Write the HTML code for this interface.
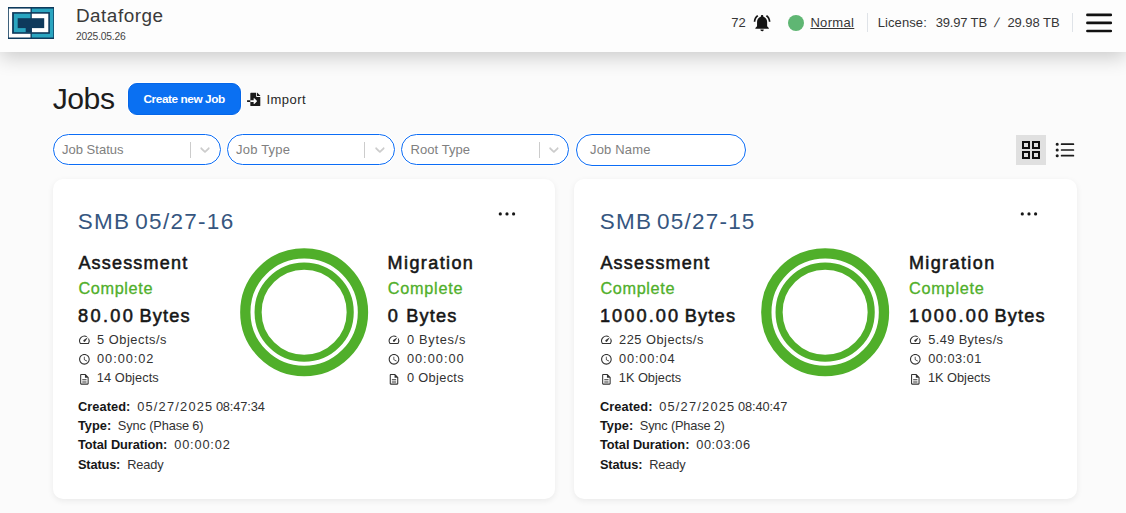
<!DOCTYPE html>
<html lang="en">
<head>
<meta charset="utf-8">
<title>Dataforge - Jobs</title>
<style>
*{box-sizing:border-box}
html,body{margin:0;padding:0}
body{width:1126px;height:513px;overflow:hidden;position:relative;background:#fbfbfb;font-family:"Liberation Sans",sans-serif;color:#1f1f1f}
.t{position:absolute;margin:0;padding:0;white-space:pre;font-weight:400;font-style:normal}
.ic,.ring{position:absolute;display:block;overflow:visible}
header{position:absolute;left:0;top:0;width:1126px;height:52px;background:#fdfdfd;box-shadow:0 5px 20px rgba(0,0,0,.2);z-index:2}
main{position:absolute;left:0;top:0;width:1126px;height:513px}
.vsep{position:absolute;top:13px;width:1px;height:19px;background:#dfe3e8}
.dot{position:absolute;left:788px;top:15px;width:16px;height:16px;border-radius:50%;background:#5fb673}
.btn{position:absolute;left:128px;top:83px;width:113px;height:32px;margin:0;padding:0;font:inherit;border-radius:9px;background:#0a70f2;border:1px solid #0566e8;box-shadow:0 0 0 1px #fff}
.sel{position:absolute;top:134px;width:168px;height:31px;border:1px solid #0c6df6;border-radius:16px;background:#fff;box-shadow:0 0 0 1px #fff}
.sel .sep{position:absolute;left:136px;top:7px;width:1px;height:16px;background:#cccccc}
.inp{position:absolute;left:576px;top:134px;width:170px;height:32px;border:1px solid #0c6df6;border-radius:16px;background:#fff;box-shadow:0 0 0 1px #fff}
.gridbtn{position:absolute;left:1016px;top:135px;width:30px;height:30px;background:#e0e0e0}
.card{position:absolute;top:179px;height:320px;border-radius:10px;background:#fff;box-shadow:0 2px 6px rgba(0,0,0,.07)}
</style>
</head>
<body>
<header>
    <svg class="ic" style="left:8px;top:7px" width="46" height="32" viewBox="0 0 46 32">
      <rect width="46" height="32" fill="#0e3a5c"/>
      <rect x="0.8" y="1.6" width="21.7" height="28.9" fill="#fff"/>
      <rect x="23.8" y="1.6" width="21.5" height="28.9" fill="#2aa5c0"/>
      <rect x="4.1" y="5.1" width="37.8" height="21.7" fill="#0e3a5c"/>
      <rect x="5.9" y="6.7" width="16.6" height="18.5" fill="#2aa5c0"/>
      <rect x="23.8" y="6.7" width="16.5" height="18.5" fill="#fff"/>
      <rect x="9.7" y="11.2" width="26.5" height="9.9" fill="#0e3a5c"/>
      <rect x="17.7" y="20" width="6.1" height="5.3" fill="#0e3a5c"/>
    </svg>
    <span class="t" style="left:75.90px;top:7.00px;font-size:18.9px;line-height:18.9px;letter-spacing:0.529px;color:#3a3a3a;">Dataforge</span>
    <span class="t" style="left:76.00px;top:32.00px;font-size:10.3px;line-height:10.3px;letter-spacing:-0.194px;color:#444;">2025.05.26</span>
    <span class="t" style="left:731.20px;top:16.00px;font-size:13px;line-height:13px;letter-spacing:0.031px;color:#363636;">72</span>
    <svg class="ic" style="left:752px;top:12px" width="20.2" height="20.2" viewBox="0 0 24 24" fill="#151515"><path transform="translate(0.000 0.950)" d="M7.58 4.08L6.15 2.65C3.75 4.48 2.17 7.3 2.03 10.5h2c.15-2.65 1.51-4.97 3.55-6.42zm12.39 6.42h2c-.15-3.2-1.73-6.02-4.12-7.85l-1.42 1.43c2.02 1.45 3.39 3.77 3.54 6.42zM18 11c0-3.07-1.64-5.64-4.5-6.32V4c0-.83-.67-1.5-1.5-1.5s-1.5.67-1.5 1.5v.68C7.63 5.36 6 7.92 6 11v5l-2 2v1h16v-1l-2-2v-5zm-6 11c.14 0 .27-.01.4-.04.65-.14 1.18-.58 1.44-1.18.1-.24.15-.5.15-.78h-4c.01 1.1.9 2 2.01 2z"/></svg>
    <i class="dot"></i>
    <a class="t" style="left:810.40px;top:16.00px;font-size:13px;line-height:13px;letter-spacing:0.332px;color:#363636;text-decoration:underline;text-decoration-thickness:1px;text-underline-offset:1px;">Normal</a>
    <i class="vsep" style="left:867px"></i>
    <span class="t" style="left:877.70px;top:16.00px;font-size:13px;line-height:13px;letter-spacing:0.097px;color:#363636;">License:</span>
    <span class="t" style="left:935.70px;top:16.00px;font-size:13px;line-height:13px;letter-spacing:-0.162px;color:#363636;">39.97 TB</span>
    <span class="t" style="left:995.20px;top:16.00px;font-size:13px;line-height:13px;color:#363636;display:inline-block;transform:skewX(-16deg);">/</span>
    <span class="t" style="left:1007.40px;top:16.00px;font-size:13px;line-height:13px;letter-spacing:-0.033px;color:#363636;">29.98 TB</span>
    <i class="vsep" style="left:1072px"></i>
    <svg class="ic burger" style="left:1084px;top:10px" width="30" height="26" viewBox="0 0 30 26" fill="none" stroke="#111" stroke-width="2.6" stroke-linecap="round"><path d="M3.4 4.9H26.8M3.4 12.9H26.8M3.4 21H26.8"/></svg>
</header>
<main>
    <h1 class="t" style="left:52.70px;top:84.00px;font-size:30.2px;line-height:30.2px;letter-spacing:-0.489px;color:#1d1d1d;">Jobs</h1>
    <button class="btn" type="button"><span class="t" style="left:14.50px;top:10.00px;font-size:11.8px;line-height:11.8px;font-weight:700;letter-spacing:-0.423px;color:#ffffff;">Create new Job</span></button>
    <svg class="ic" style="left:247px;top:92px" width="13.3" height="13.3" viewBox="0 0 512 512" fill="#1b1b1b"><path transform="translate(0.000 30.797)" d="M16 288c-8.8 0-16 7.2-16 16v32c0 8.8 7.2 16 16 16h112v-64zm489-183L407.1 7c-4.5-4.5-10.600-7-17-7H384v128h128v-6.100c0-6.300-2.500-12.400-7-16.900zm-153 31V0H152c-13.300 0-24 10.700-24 24v264h128v-65.200c0-14.300 17.300-21.400 27.400-11.300L379 308c6.600 6.700 6.600 17.400 0 24l-95.700 96.400c-10.100 10.100-27.400 3-27.400-11.300V352H128v136c0 13.300 10.700 24 24 24h336c13.300 0 24-10.700 24-24V160H376c-13.200 0-24-10.800-24-24z"/></svg>
    <span class="t" style="left:266.50px;top:93.00px;font-size:13px;line-height:13px;letter-spacing:0.451px;color:#262626;">Import</span>
    <div class="sel" style="left:53px"><span class="t" style="left:8.00px;top:8.00px;font-size:13px;line-height:13px;letter-spacing:0.007px;color:#808080;">Job Status</span><i class="sep"></i><svg class="ic" style="left:143px;top:6px" width="16" height="16" viewBox="0 0 20 20" fill="#cccccc"><path transform="translate(0.000 0.750)" d="M4.516 7.548c0.436-0.446 1.043-0.481 1.576 0l3.908 3.747 3.908-3.747c0.533-0.481 1.141-0.446 1.574 0 0.436 0.445 0.408 1.197 0 1.615-0.406 0.418-4.695 4.502-4.695 4.502-0.217 0.223-0.502 0.335-0.787 0.335s-0.570-0.112-0.789-0.335c0 0-4.287-4.084-4.695-4.502s-0.436-1.170 0-1.615z"/></svg></div>
    <div class="sel" style="left:227px"><span class="t" style="left:8.00px;top:8.00px;font-size:13px;line-height:13px;letter-spacing:0.21px;color:#808080;">Job Type</span><i class="sep"></i><svg class="ic" style="left:143px;top:6px" width="16" height="16" viewBox="0 0 20 20" fill="#cccccc"><path transform="translate(1.125 0.750)" d="M4.516 7.548c0.436-0.446 1.043-0.481 1.576 0l3.908 3.747 3.908-3.747c0.533-0.481 1.141-0.446 1.574 0 0.436 0.445 0.408 1.197 0 1.615-0.406 0.418-4.695 4.502-4.695 4.502-0.217 0.223-0.502 0.335-0.787 0.335s-0.570-0.112-0.789-0.335c0 0-4.287-4.084-4.695-4.502s-0.436-1.170 0-1.615z"/></svg></div>
    <div class="sel" style="left:401px"><span class="t" style="left:8.50px;top:8.00px;font-size:13px;line-height:13px;letter-spacing:0.059px;color:#808080;">Root Type</span><i class="sep" style="left:137px"></i><svg class="ic" style="left:143px;top:6px" width="16" height="16" viewBox="0 0 20 20" fill="#cccccc"><path transform="translate(1.125 0.750)" d="M4.516 7.548c0.436-0.446 1.043-0.481 1.576 0l3.908 3.747 3.908-3.747c0.533-0.481 1.141-0.446 1.574 0 0.436 0.445 0.408 1.197 0 1.615-0.406 0.418-4.695 4.502-4.695 4.502-0.217 0.223-0.502 0.335-0.787 0.335s-0.570-0.112-0.789-0.335c0 0-4.287-4.084-4.695-4.502s-0.436-1.170 0-1.615z"/></svg></div>
    <div class="inp"><span class="t" style="left:13.00px;top:8.00px;font-size:13px;line-height:13px;letter-spacing:0.179px;color:#808080;">Job Name</span></div>
    <div class="gridbtn"></div>
    <svg class="ic" style="left:1019px;top:138px" width="24" height="24" viewBox="0 0 24 24" fill="#111"><path d="M3 3v8h8V3H3zm6 6H5V5h4v4zm-6 4v8h8v-8H3zm6 6H5v-4h4v4zm4-16v8h8V3h-8zm6 6h-4V5h4v4zm-6 4v8h8v-8h-8zm6 6h-4v-4h4v4z"/></svg>
    <svg class="ic" style="left:1053px;top:138px" width="24" height="24" viewBox="0 0 24 24" fill="#1c1c1c" stroke="#1c1c1c" stroke-width="1.7" stroke-linecap="round"><circle cx="4.2" cy="6.2" r="0.7"/><circle cx="4.2" cy="12" r="0.7"/><circle cx="4.2" cy="17.7" r="0.7"/><path d="M8.6 6.2H20.4M8.6 12H20.4M8.6 17.7H20.4" fill="none"/></svg>
    <section class="card" style="left:53.2px;width:501.6px">
      <h2 class="t" style="left:24.50px;top:32.00px;font-size:22.5px;line-height:22.5px;letter-spacing:1.297px;color:#36567f;word-spacing:-2.6px;">SMB 05/27-16</h2>
      <svg class="ic" style="left:441.80px;top:28px" width="24" height="14" viewBox="0 0 24 14" fill="#161616"><circle cx="5.3" cy="6.9" r="1.6"/><circle cx="12" cy="6.9" r="1.6"/><circle cx="18.6" cy="6.9" r="1.6"/></svg>
      <div class="stat">
        <h3 class="t" style="left:25.20px;top:75.00px;font-size:18px;line-height:18px;letter-spacing:1.195px;color:#161616;-webkit-text-stroke:0.55px #161616;">Assessment</h3>
        <span class="t" style="left:25.20px;top:101.00px;font-size:16.3px;line-height:16.3px;letter-spacing:0.63px;color:#50af2a;-webkit-text-stroke:0.3px #50af2a;">Complete</span>
        <strong class="t" style="left:24.70px;top:128.00px;font-size:18.2px;line-height:18.2px;letter-spacing:2.396px;color:#161616;-webkit-text-stroke:0.55px #161616;">80.00</strong><strong class="t" style="left:86.20px;top:128.00px;font-size:18.2px;line-height:18.2px;letter-spacing:1.175px;color:#161616;-webkit-text-stroke:0.55px #161616;">Bytes</strong>
        <svg class="ic" style="left:24.8px;top:154px" width="12.8" height="12.8" viewBox="0 0 24 24" fill="#333"><path transform="translate(0.000 0.750)" d="M20.38 8.57l-1.23 1.85a8 8 0 0 1-.22 7.58H5.07A8 8 0 0 1 15.58 6.85l1.85-1.23A10 10 0 0 0 3.35 19a2 2 0 0 0 1.72 1h13.85a2 2 0 0 0 1.74-1 10 10 0 0 0-.27-10.44zm-9.79 6.84a2 2 0 0 0 2.83 0l5.66-8.49-8.49 5.66a2 2 0 0 0 0 2.83z"/></svg><span class="t" style="left:43.90px;top:155.00px;font-size:12.8px;line-height:12.8px;letter-spacing:0.528px;color:#323232;">5 Objects/s</span>
        <svg class="ic" style="left:24.8px;top:173px" width="12.8" height="12.8" viewBox="0 0 24 24" fill="#333"><path transform="translate(0.000 1.687)" d="M11.99 2C6.47 2 2 6.48 2 12s4.47 10 9.99 10C17.52 22 22 17.52 22 12S17.52 2 11.99 2zM12 20c-4.42 0-8-3.58-8-8s3.58-8 8-8 8 3.58 8 8-3.58 8-8 8zm.5-13H11v6l5.25 3.15.75-1.23-4.5-2.67z"/></svg><span class="t" style="left:43.90px;top:174.00px;font-size:12.8px;line-height:12.8px;letter-spacing:0.925px;color:#323232;">00:00:02</span>
        <svg class="ic" style="left:24.8px;top:193px" width="12.8" height="12.8" viewBox="0 0 24 24" fill="#333"><path transform="translate(0.000 1.687)" d="M8 16h8v2H8zm0-4h8v2H8zm6-10H6c-1.1 0-2 .9-2 2v16c0 1.1.89 2 1.99 2H18c1.1 0 2-.9 2-2V8l-6-6zm4 18H6V4h7v5h5v11z"/></svg><span class="t" style="left:43.60px;top:193.00px;font-size:12.8px;line-height:12.8px;letter-spacing:0.09px;color:#323232;">14 Objects</span>
      </div>
      <svg class="ring" style="left:186.50px;top:68.70px" width="128.3" height="128.3" viewBox="0 0 128 128" fill="none" stroke="#50af2a"><circle cx="64" cy="64" r="58.7" stroke-width="10.3"/><circle cx="64" cy="64" r="45.95" stroke-width="7.1"/></svg>
      <div class="stat">
        <h3 class="t" style="left:334.40px;top:75.00px;font-size:18px;line-height:18px;letter-spacing:1.409px;color:#161616;-webkit-text-stroke:0.55px #161616;">Migration</h3>
        <span class="t" style="left:334.60px;top:101.00px;font-size:16.3px;line-height:16.3px;letter-spacing:0.716px;color:#50af2a;-webkit-text-stroke:0.3px #50af2a;">Complete</span>
        <strong class="t" style="left:334.60px;top:128.00px;font-size:18.2px;line-height:18.2px;color:#161616;-webkit-text-stroke:0.55px #161616;">0</strong><strong class="t" style="left:353.00px;top:128.00px;font-size:18.2px;line-height:18.2px;letter-spacing:1.175px;color:#161616;-webkit-text-stroke:0.55px #161616;">Bytes</strong>
        <svg class="ic" style="left:333.8px;top:154px" width="12.8" height="12.8" viewBox="0 0 24 24" fill="#333"><path transform="translate(1.125 0.750)" d="M20.38 8.57l-1.23 1.85a8 8 0 0 1-.22 7.58H5.07A8 8 0 0 1 15.58 6.85l1.85-1.23A10 10 0 0 0 3.35 19a2 2 0 0 0 1.72 1h13.85a2 2 0 0 0 1.74-1 10 10 0 0 0-.27-10.44zm-9.79 6.84a2 2 0 0 0 2.83 0l5.66-8.49-8.49 5.66a2 2 0 0 0 0 2.83z"/></svg><span class="t" style="left:353.70px;top:155.00px;font-size:12.8px;line-height:12.8px;letter-spacing:0.732px;color:#323232;">0 Bytes/s</span>
        <svg class="ic" style="left:333.8px;top:173px" width="12.8" height="12.8" viewBox="0 0 24 24" fill="#333"><path transform="translate(1.125 1.687)" d="M11.99 2C6.47 2 2 6.48 2 12s4.47 10 9.99 10C17.52 22 22 17.52 22 12S17.52 2 11.99 2zM12 20c-4.42 0-8-3.58-8-8s3.58-8 8-8 8 3.58 8 8-3.58 8-8 8zm.5-13H11v6l5.25 3.15.75-1.23-4.5-2.67z"/></svg><span class="t" style="left:353.70px;top:174.00px;font-size:12.8px;line-height:12.8px;letter-spacing:0.996px;color:#323232;">00:00:00</span>
        <svg class="ic" style="left:333.8px;top:193px" width="12.8" height="12.8" viewBox="0 0 24 24" fill="#333"><path transform="translate(1.125 1.687)" d="M8 16h8v2H8zm0-4h8v2H8zm6-10H6c-1.1 0-2 .9-2 2v16c0 1.1.89 2 1.99 2H18c1.1 0 2-.9 2-2V8l-6-6zm4 18H6V4h7v5h5v11z"/></svg><span class="t" style="left:353.70px;top:193.00px;font-size:12.8px;line-height:12.8px;letter-spacing:0.342px;color:#323232;">0 Objects</span>
      </div>
      <div class="meta">
        <b class="t" style="left:24.80px;top:222.00px;font-size:12.8px;line-height:12.8px;font-weight:700;letter-spacing:0.068px;color:#161616;">Created:</b><span class="t" style="left:84.00px;top:222.00px;font-size:12.8px;line-height:12.8px;letter-spacing:1.215px;color:#323232;">05/27/2025</span><span class="t" style="left:162.70px;top:222.00px;font-size:12.8px;line-height:12.8px;letter-spacing:-0.133px;color:#323232;">08:47:34</span>
        <b class="t" style="left:24.80px;top:241.00px;font-size:12.8px;line-height:12.8px;font-weight:700;color:#161616;">Type:</b><span class="t" style="left:64.60px;top:241.00px;font-size:12.8px;line-height:12.8px;letter-spacing:-0.131px;color:#323232;">Sync (Phase 6)</span>
        <b class="t" style="left:24.80px;top:260.00px;font-size:12.8px;line-height:12.8px;font-weight:700;letter-spacing:-0.046px;color:#161616;">Total Duration:</b><span class="t" style="left:121.00px;top:260.00px;font-size:12.8px;line-height:12.8px;letter-spacing:0.825px;color:#323232;">00:00:02</span>
        <b class="t" style="left:24.80px;top:280.00px;font-size:12.8px;line-height:12.8px;font-weight:700;letter-spacing:-0.162px;color:#161616;">Status:</b><span class="t" style="left:74.10px;top:280.00px;font-size:12.8px;line-height:12.8px;letter-spacing:-0.175px;color:#323232;">Ready</span>
      </div>
    </section>
    <section class="card" style="left:574.0px;width:503.0px">
      <h2 class="t" style="left:25.70px;top:32.00px;font-size:22.5px;line-height:22.5px;letter-spacing:1.224px;color:#36567f;word-spacing:-2.6px;">SMB 05/27-15</h2>
      <svg class="ic" style="left:443.00px;top:28px" width="24" height="14" viewBox="0 0 24 14" fill="#161616"><circle cx="5.3" cy="6.9" r="1.6"/><circle cx="12" cy="6.9" r="1.6"/><circle cx="18.6" cy="6.9" r="1.6"/></svg>
      <div class="stat">
        <h3 class="t" style="left:26.40px;top:75.00px;font-size:18px;line-height:18px;letter-spacing:1.195px;color:#161616;-webkit-text-stroke:0.55px #161616;">Assessment</h3>
        <span class="t" style="left:26.40px;top:101.00px;font-size:16.3px;line-height:16.3px;letter-spacing:0.63px;color:#50af2a;-webkit-text-stroke:0.3px #50af2a;">Complete</span>
        <strong class="t" style="left:25.90px;top:128.00px;font-size:18.2px;line-height:18.2px;letter-spacing:2.092px;color:#161616;-webkit-text-stroke:0.55px #161616;">1000.00</strong><strong class="t" style="left:110.80px;top:128.00px;font-size:18.2px;line-height:18.2px;letter-spacing:1.175px;color:#161616;-webkit-text-stroke:0.55px #161616;">Bytes</strong>
        <svg class="ic" style="left:26px;top:154px" width="12.8" height="12.8" viewBox="0 0 24 24" fill="#333"><path transform="translate(0.000 0.750)" d="M20.38 8.57l-1.23 1.85a8 8 0 0 1-.22 7.58H5.07A8 8 0 0 1 15.58 6.85l1.85-1.23A10 10 0 0 0 3.35 19a2 2 0 0 0 1.72 1h13.85a2 2 0 0 0 1.74-1 10 10 0 0 0-.27-10.44zm-9.79 6.84a2 2 0 0 0 2.83 0l5.66-8.49-8.49 5.66a2 2 0 0 0 0 2.83z"/></svg><span class="t" style="left:45.10px;top:155.00px;font-size:12.8px;line-height:12.8px;letter-spacing:0.496px;color:#323232;">225 Objects/s</span>
        <svg class="ic" style="left:26px;top:173px" width="12.8" height="12.8" viewBox="0 0 24 24" fill="#333"><path transform="translate(0.000 1.687)" d="M11.99 2C6.47 2 2 6.48 2 12s4.47 10 9.99 10C17.52 22 22 17.52 22 12S17.52 2 11.99 2zM12 20c-4.42 0-8-3.58-8-8s3.58-8 8-8 8 3.58 8 8-3.58 8-8 8zm.5-13H11v6l5.25 3.15.75-1.23-4.5-2.67z"/></svg><span class="t" style="left:45.10px;top:174.00px;font-size:12.8px;line-height:12.8px;letter-spacing:0.81px;color:#323232;">00:00:04</span>
        <svg class="ic" style="left:26px;top:193px" width="12.8" height="12.8" viewBox="0 0 24 24" fill="#333"><path transform="translate(0.000 1.687)" d="M8 16h8v2H8zm0-4h8v2H8zm6-10H6c-1.1 0-2 .9-2 2v16c0 1.1.89 2 1.99 2H18c1.1 0 2-.9 2-2V8l-6-6zm4 18H6V4h7v5h5v11z"/></svg><span class="t" style="left:44.80px;top:193.00px;font-size:12.8px;line-height:12.8px;letter-spacing:-0.022px;color:#323232;">1K Objects</span>
      </div>
      <svg class="ring" style="left:186.70px;top:68.70px" width="128.3" height="128.3" viewBox="0 0 128 128" fill="none" stroke="#50af2a"><circle cx="64" cy="64" r="58.7" stroke-width="10.3"/><circle cx="64" cy="64" r="45.95" stroke-width="7.1"/></svg>
      <div class="stat">
        <h3 class="t" style="left:334.90px;top:75.00px;font-size:18px;line-height:18px;letter-spacing:1.409px;color:#161616;-webkit-text-stroke:0.55px #161616;">Migration</h3>
        <span class="t" style="left:335.10px;top:101.00px;font-size:16.3px;line-height:16.3px;letter-spacing:0.716px;color:#50af2a;-webkit-text-stroke:0.3px #50af2a;">Complete</span>
        <strong class="t" style="left:335.10px;top:128.00px;font-size:18.2px;line-height:18.2px;letter-spacing:2.225px;color:#161616;-webkit-text-stroke:0.55px #161616;">1000.00</strong><strong class="t" style="left:420.50px;top:128.00px;font-size:18.2px;line-height:18.2px;letter-spacing:1.175px;color:#161616;-webkit-text-stroke:0.55px #161616;">Bytes</strong>
        <svg class="ic" style="left:334px;top:154px" width="12.8" height="12.8" viewBox="0 0 24 24" fill="#333"><path transform="translate(1.687 0.750)" d="M20.38 8.57l-1.23 1.85a8 8 0 0 1-.22 7.58H5.07A8 8 0 0 1 15.58 6.85l1.85-1.23A10 10 0 0 0 3.35 19a2 2 0 0 0 1.72 1h13.85a2 2 0 0 0 1.74-1 10 10 0 0 0-.27-10.44zm-9.79 6.84a2 2 0 0 0 2.83 0l5.66-8.49-8.49 5.66a2 2 0 0 0 0 2.83z"/></svg><span class="t" style="left:354.20px;top:155.00px;font-size:12.8px;line-height:12.8px;letter-spacing:0.398px;color:#323232;">5.49 Bytes/s</span>
        <svg class="ic" style="left:334px;top:173px" width="12.8" height="12.8" viewBox="0 0 24 24" fill="#333"><path transform="translate(1.687 1.687)" d="M11.99 2C6.47 2 2 6.48 2 12s4.47 10 9.99 10C17.52 22 22 17.52 22 12S17.52 2 11.99 2zM12 20c-4.42 0-8-3.58-8-8s3.58-8 8-8 8 3.58 8 8-3.58 8-8 8zm.5-13H11v6l5.25 3.15.75-1.23-4.5-2.67z"/></svg><span class="t" style="left:354.20px;top:174.00px;font-size:12.8px;line-height:12.8px;letter-spacing:0.467px;color:#323232;">00:03:01</span>
        <svg class="ic" style="left:334px;top:193px" width="12.8" height="12.8" viewBox="0 0 24 24" fill="#333"><path transform="translate(1.687 1.687)" d="M8 16h8v2H8zm0-4h8v2H8zm6-10H6c-1.1 0-2 .9-2 2v16c0 1.1.89 2 1.99 2H18c1.1 0 2-.9 2-2V8l-6-6zm4 18H6V4h7v5h5v11z"/></svg><span class="t" style="left:353.90px;top:193.00px;font-size:12.8px;line-height:12.8px;letter-spacing:-0.01px;color:#323232;">1K Objects</span>
      </div>
      <div class="meta">
        <b class="t" style="left:26.00px;top:222.00px;font-size:12.8px;line-height:12.8px;font-weight:700;letter-spacing:0.068px;color:#161616;">Created:</b><span class="t" style="left:85.20px;top:222.00px;font-size:12.8px;line-height:12.8px;letter-spacing:1.215px;color:#323232;">05/27/2025</span><span class="t" style="left:163.90px;top:222.00px;font-size:12.8px;line-height:12.8px;letter-spacing:-0.061px;color:#323232;">08:40:47</span>
        <b class="t" style="left:26.00px;top:241.00px;font-size:12.8px;line-height:12.8px;font-weight:700;color:#161616;">Type:</b><span class="t" style="left:65.80px;top:241.00px;font-size:12.8px;line-height:12.8px;letter-spacing:-0.185px;color:#323232;">Sync (Phase 2)</span>
        <b class="t" style="left:26.00px;top:260.00px;font-size:12.8px;line-height:12.8px;font-weight:700;letter-spacing:-0.046px;color:#161616;">Total Duration:</b><span class="t" style="left:122.20px;top:260.00px;font-size:12.8px;line-height:12.8px;letter-spacing:0.596px;color:#323232;">00:03:06</span>
        <b class="t" style="left:26.00px;top:280.00px;font-size:12.8px;line-height:12.8px;font-weight:700;letter-spacing:-0.163px;color:#161616;">Status:</b><span class="t" style="left:75.30px;top:280.00px;font-size:12.8px;line-height:12.8px;letter-spacing:-0.175px;color:#323232;">Ready</span>
      </div>
    </section>
</main>
</body>
</html>
